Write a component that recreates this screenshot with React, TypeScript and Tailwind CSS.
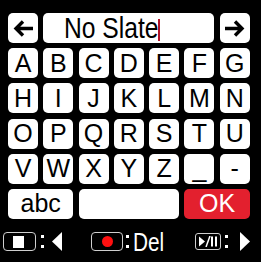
import React from 'react';

const font = { fontFamily: '"Liberation Sans", Arial, sans-serif' };

const rows = [
  ['A', 'B', 'C', 'D', 'E', 'F', 'G'],
  ['H', 'I', 'J', 'K', 'L', 'M', 'N'],
  ['O', 'P', 'Q', 'R', 'S', 'T', 'U'],
  ['V', 'W', 'X', 'Y', 'Z', '_', '-'],
];

function Key({
  children,
  className = '',
  tone = 'bg-white text-black',
}: {
  children?: React.ReactNode;
  className?: string;
  tone?: string;
}) {
  return (
    <div className={`flex items-center justify-center rounded-[5px] text-[25px] leading-none ${tone} ${className}`}>
      {children}
    </div>
  );
}

function Arrow({ dir }: { dir: 'left' | 'right' }) {
  return (
    <svg width="21" height="17" viewBox="0 0 21 17" className={dir === 'right' ? 'rotate-180' : ''}>
      <path d="M3 8.5 H20 M10 1.5 L3 8.5 L10 15.5" fill="none" stroke="black" strokeWidth="3.4" />
    </svg>
  );
}

function Colon() {
  return (
    <div className="flex h-[19px] flex-col justify-between py-[3px]">
      <div className="h-[3px] w-[3px] bg-white" />
      <div className="h-[3px] w-[3px] bg-white" />
    </div>
  );
}

export default function App() {
  return (
    <div className="h-[262px] w-[261px] overflow-hidden bg-black pl-[8px] pt-[13px]" style={font}>
      {/* 键盘 */}
      <div className="grid grid-cols-[repeat(7,30px)] grid-rows-[repeat(6,30px)] gap-x-[5.3px] gap-y-[5.2px]">
        <Key>
          <Arrow dir="left" />
        </Key>
        <div className="relative col-span-5 flex items-center rounded-[5px] bg-white pl-[21px]">
          <span className="inline-block origin-left scale-x-[0.85] text-[29px] leading-none text-black">
            No Slate
          </span>
          <div className="absolute left-[115px] top-[6px] h-[22px] w-[2px] bg-[#b3152a]" />
        </div>
        <Key>
          <Arrow dir="right" />
        </Key>
        {rows.flat().map((k) => (
          <Key key={k}>{k}</Key>
        ))}
        <Key className="col-span-2">abc</Key>
        <Key className="col-span-3" />
        <Key className="col-span-2" tone="bg-[#e3202e] text-white">
          OK
        </Key>
      </div>

      {/* 底部按键提示 */}
      <div className="-ml-[8px] mt-[13px] flex h-[20px] items-center text-white">
        <div className="ml-[3px] flex h-[19px] w-[33px] items-center justify-center rounded-[4px] border-[1.5px] border-[#cfcfcf]">
          <div className="-ml-[2px] h-[12px] w-[11px] bg-white" />
        </div>
        <div className="ml-[5px]">
          <Colon />
        </div>
        <svg width="10" height="19" viewBox="0 0 10 19" className="ml-[8px]">
          <path d="M10 0 L0 9.5 L10 19 Z" fill="white" />
        </svg>
        <div className="ml-[29px] flex h-[19px] w-[32px] items-center justify-center rounded-[4px] border-[1.5px] border-[#cfcfcf]">
          <div className="h-[11px] w-[11px] rounded-full bg-[#ff1010]" />
        </div>
        <div className="ml-[3px]">
          <Colon />
        </div>
        <span className="ml-[4px] inline-block origin-left scale-x-[0.8] text-[26px] leading-none">Del</span>
        <div className="ml-[23px] flex h-[17px] w-[26px] items-center justify-center rounded-[3px] border-[1.5px] border-[#cfcfcf]">
          <svg width="19" height="11" viewBox="0 0 19 11">
            <path d="M0 0.5 L6 5.5 L0 10.5 Z" fill="white" />
            <path d="M11 0 L7 11" stroke="white" strokeWidth="1.5" />
            <rect x="12" y="0.5" width="2" height="10" fill="white" />
            <rect x="16" y="0.5" width="2" height="10" fill="white" />
          </svg>
        </div>
        <div className="ml-[4px]">
          <Colon />
        </div>
        <svg width="10" height="19" viewBox="0 0 10 19" className="ml-[12px]">
          <path d="M0 0 L10 9.5 L0 19 Z" fill="white" />
        </svg>
      </div>
    </div>
  );
}
